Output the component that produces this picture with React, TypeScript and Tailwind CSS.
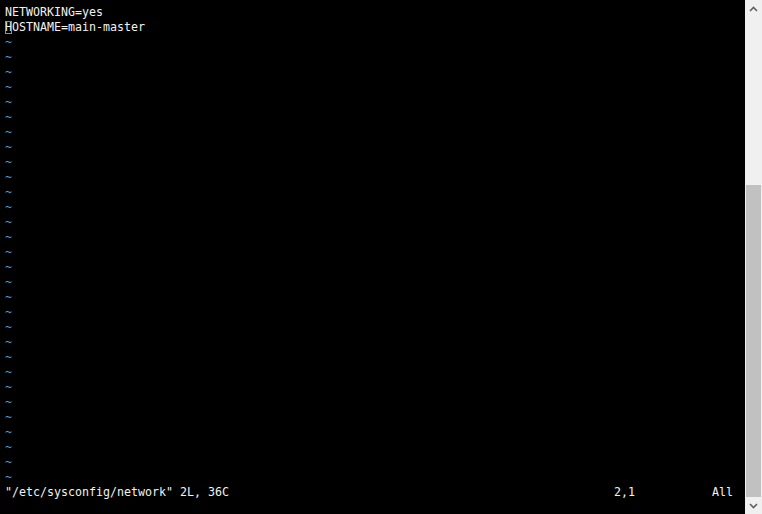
import React from "react";

const mono = "font-['DejaVu_Sans_Mono','Liberation_Mono',monospace]";

export default function App() {
  const tildes = Array.from({ length: 30 });
  const status =
    '"/etc/sysconfig/network" 2L, 36C'.padEnd(87, " ") + "2,1".padEnd(14, " ") + "All";
  return (
    <div className="w-[762px] h-[514px] flex bg-black overflow-hidden">
      <div
        className={`flex-1 bg-black pt-[5px] pl-[5px] text-[11.63px] leading-[15px] text-[#f2f2f2] whitespace-pre ${mono}`}
      >
        <div className="h-[15px]">NETWORKING=yes</div>
        <div className="h-[15px] flex">
          <span className="relative inline-block w-[7px]">
            H
            <span className="absolute left-0 top-[1px] w-[7px] h-[13px] border border-[#1ee11e] z-10" />
          </span>
          <span>OSTNAME=main-master</span>
        </div>
        {tildes.map((_, i) => (
          <div key={i} className="h-[15px] text-[#4f9fdc]">
            ~
          </div>
        ))}
        <div className="h-[15px]">{status}</div>
      </div>
      <div className="w-[17px] h-full bg-[#f0f0f0] flex flex-col">
        <div className="h-[17px] flex items-center justify-center">
          <svg width="9" height="6" viewBox="0 0 9 6">
            <path d="M1 5 L4.5 1.5 L8 5" stroke="#606060" strokeWidth="1.6" fill="none" />
          </svg>
        </div>
        <div className="flex-1 flex flex-col justify-end">
          <div className="h-[312px] ml-[1px] mr-[1px] bg-[#c1c1c1]" />
        </div>
        <div className="h-[17px] flex items-center justify-center">
          <svg width="9" height="6" viewBox="0 0 9 6">
            <path d="M1 1 L4.5 4.5 L8 1" stroke="#606060" strokeWidth="1.6" fill="none" />
          </svg>
        </div>
      </div>
    </div>
  );
}
